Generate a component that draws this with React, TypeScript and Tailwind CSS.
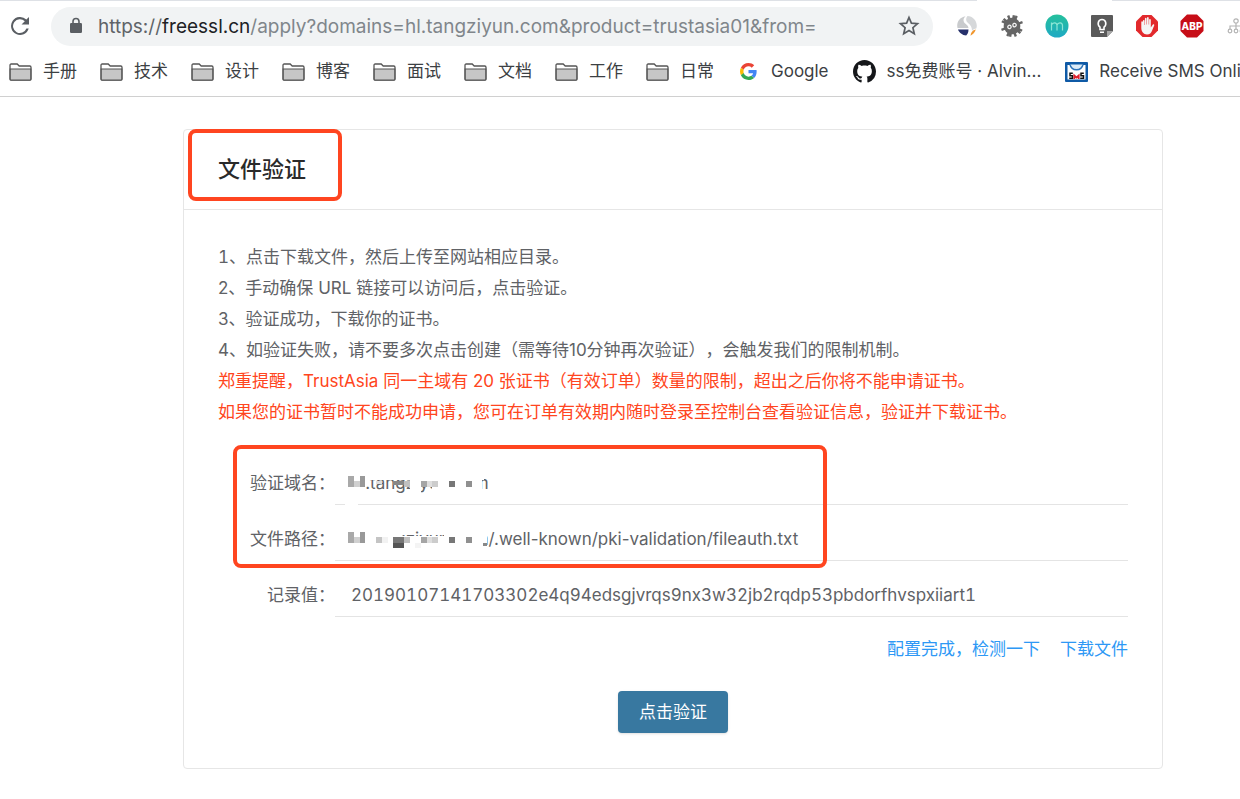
import React, { useState } from 'react'

interface IconItem {
  name: string
  icon: React.ReactNode
}

const FolderIcon = () => (
  <svg width="23" height="18" viewBox="0 0 23 18" fill="none" className="shrink-0">
    <path d="M1 16V2.2C1 1.5 1.4 1 2.2 1h6l2 2h10.6c.7 0 1.2.5 1.2 1.2V16c0 .6-.4 1-1 1H2c-.6 0-1-.4-1-1z" fill="#fff" stroke="#555" strokeWidth="1.3" />
    <path d="M1.2 6h20.6v10.2c0 .5-.3.8-.8.8H2c-.5 0-.8-.3-.8-.8z" fill="#c6c6c6" stroke="#555" strokeWidth="1.2" />
  </svg>
)

const GoogleIcon = () => (
  <svg width="17" height="17" viewBox="0 0 48 48">
    <path fill="#EA4335" d="M24 9.5c3.54 0 6.71 1.22 9.21 3.6l6.85-6.85C35.9 2.38 30.47 0 24 0 14.62 0 6.51 5.38 2.56 13.22l7.98 6.19C12.43 13.72 17.74 9.5 24 9.5z" />
    <path fill="#4285F4" d="M46.98 24.55c0-1.57-.15-3.09-.38-4.55H24v9.02h12.94c-.58 2.96-2.26 5.48-4.78 7.18l7.73 6c4.51-4.18 7.09-10.36 7.09-17.65z" />
    <path fill="#FBBC05" d="M10.53 28.59c-.48-1.45-.76-2.99-.76-4.59s.27-3.14.76-4.59l-7.98-6.19C.92 16.46 0 20.12 0 24c0 3.88.92 7.54 2.56 10.78l7.97-6.19z" />
    <path fill="#34A853" d="M24 48c6.48 0 11.93-2.13 15.89-5.81l-7.73-6c-2.15 1.45-4.92 2.3-8.16 2.3-6.26 0-11.57-4.22-13.47-9.91l-7.98 6.19C6.51 42.62 14.62 48 24 48z" />
  </svg>
)

const GithubIcon = () => (
  <svg width="23" height="23" viewBox="0 0 16 16" fill="#15171a">
    <path d="M8 0C3.58 0 0 3.58 0 8c0 3.54 2.29 6.53 5.47 7.59.4.07.55-.17.55-.38 0-.19-.01-.82-.01-1.49-2.01.37-2.53-.49-2.69-.94-.09-.23-.48-.94-.82-1.13-.28-.15-.68-.52-.01-.53.63-.01 1.08.58 1.23.82.72 1.21 1.87.87 2.33.66.07-.52.28-.87.51-1.07-1.78-.2-3.64-.89-3.64-3.95 0-.87.31-1.59.82-2.15-.08-.2-.36-1.02.08-2.12 0 0 .67-.21 2.2.82.64-.18 1.32-.27 2-.27s1.36.09 2 .27c1.53-1.04 2.2-.82 2.2-.82.44 1.1.16 1.92.08 2.12.51.56.82 1.27.82 2.15 0 3.07-1.87 3.75-3.65 3.95.29.25.54.73.54 1.48 0 1.07-.01 1.93-.01 2.2 0 .21.15.46.55.38A8.01 8.01 0 0 0 16 8c0-4.42-3.58-8-8-8z" />
  </svg>
)

const SmsIcon = () => (
  <svg width="23" height="20" viewBox="0 0 23 20">
    <rect width="23" height="20" rx="1" fill="#0f5aa6" />
    <path d="M2.5 3h18v14.5h-18z" fill="#fff" />
    <path d="M5 2.5c1.5 7 11.5 7 13 0" fill="#dcebf7" stroke="#2d73b8" strokeWidth="1.4" />
    <path d="M7.8 11.3H5v2.4h2.5v2.6H4.2M18.8 11.3H16v2.4h2.5v2.6h-3.3" fill="none" stroke="#111" strokeWidth="1.5" />
    <path d="M9.3 17v-3.5l2.2 2 2.2-2V17" fill="none" stroke="#e0202c" strokeWidth="1.8" />
  </svg>
)

const folders = ['手册', '技术', '设计', '博客', '面试', '文档', '工作', '日常']

const sites: IconItem[] = [
  { name: 'Google', icon: <GoogleIcon /> },
  { name: 'ss免费账号 · Alvin...', icon: <GithubIcon /> },
  { name: 'Receive SMS Onli', icon: <SmsIcon /> },
]

const extensions: IconItem[] = [
  {
    name: 'Search',
    icon: (
      <svg width="22" height="22" viewBox="0 0 22 22">
        <path d="M9.5 1.2C4.500 2 1.2 6 1.2 10.5c0 1 .1 1.8.3 2.5h11c-.3-2-1.5-3-3-4.2C6.8 6.5 7 3.5 9.5 1.2z" fill="#c9cbcd" />
        <path d="M11.5 1c5 .2 9.300 4.400 9.300 9.700 0 1.200-.2 2-.5 2.800-1.800.3-3.300 1.200-4.300 2.500 0-4-1.500-6-4-8-2.300-2-2.500-4.500-.5-7z" fill="#d6d8da" />
        <path d="M2 14.5h10.500c0 2.500-.8 4.600-2.300 6-4-.2-7-2.800-8.200-6z" fill="#26306b" />
        <path d="M14.500 20.800c.3-3.300 1.800-5.500 5.300-6.200-.9 2.800-2.800 5-5.300 6.200z" fill="#f0962e" />
      </svg>
    ),
  },
  {
    name: 'Tools',
    icon: (
      <svg width="24" height="24" viewBox="0 0 24 24">
        <g transform="rotate(-20 12 12)">
          <path
            d="M12 .8V23.2M.8 12H23.2M4.100 4.100l15.800 15.800M19.900 4.100L4.100 19.900M6.500 2.500l11 19M17.500 2.500l-11 19"
            stroke="#666"
            strokeWidth="2.400"
          />
          <circle cx="12" cy="12" r="8.300" fill="#666" />
          <circle cx="9.300" cy="12" r="1.700" fill="#666" stroke="#f4f4f4" strokeWidth="1.300" />
          <circle cx="14.700" cy="12" r="1.700" fill="#666" stroke="#f4f4f4" strokeWidth="1.300" />
        </g>
      </svg>
    ),
  },
  {
    name: 'M',
    icon: (
      <svg width="24" height="24" viewBox="0 0 24 24">
        <defs>
          <linearGradient id="teal" x1="0" y1="0" x2="0" y2="1">
            <stop offset="0" stopColor="#25c09c" />
            <stop offset="1" stopColor="#1fa9c4" />
          </linearGradient>
        </defs>
        <circle cx="12" cy="12" r="11.5" fill="url(#teal)" />
        <path d="M6.5 16.5V8.5M6.5 11c1-3 5.5-3 5.5.5v5M12 11c1-3 5.5-3 5.5.5v5" fill="none" stroke="#8be6d6" strokeWidth="1.2" />
      </svg>
    ),
  },
  {
    name: 'Keep',
    icon: (
      <svg width="22" height="22" viewBox="0 0 22 22">
        <path d="M1 0h20a1 1 0 0 1 1 1v15l-6 6H1a1 1 0 0 1-1-1V1a1 1 0 0 1 1-1z" fill="#5a5a5a" />
        <path d="M22 16l-6 6v-6z" fill="#a5a5a5" />
        <path d="M9 14.5v-2.3c-3-2.2-2.2-7.7 2-7.7s5 5.5 2 7.7v2.3zM9 17.2h4" fill="none" stroke="#fff" strokeWidth="1.6" />
      </svg>
    ),
  },
  {
    name: 'AdBlock',
    icon: (
      <svg width="22" height="22" viewBox="0 0 22 22">
        <path d="M6.5 0h9L22 6.5v9L15.5 22h-9L0 15.5v-9z" fill="#e2292c" />
        <path d="M5.3 6.5v6.3c0 3.900 2.200 6.700 5.700 6.700 2.800 0 4.200-1.600 5-3.800l2.200-5.300c.3-1.100-1.100-1.500-1.700-.5L14.800 12.500V4.800c0-1.200-1.700-1.200-1.700 0V9.500h-.4V3c0-1.200-1.700-1.200-1.700 0v6.500h-.4V3.700c0-1.200-1.700-1.200-1.700 0V10h-.4V5.800c0-1.200-1.600-1-1.600.7z" fill="#f5f5f5" />
      </svg>
    ),
  },
  {
    name: 'Adblock Plus',
    icon: (
      <svg width="24" height="24" viewBox="0 0 24 24">
        <path d="M7 .5h10L23.5 7v10L17 23.5H7L.5 17V7z" fill="#c70d17" />
        <text x="12" y="16" textAnchor="middle" fontSize="10" fontWeight="800" fill="#fff">ABP</text>
      </svg>
    ),
  },
  {
    name: 'Sitemap',
    icon: (
      <svg width="22" height="18" viewBox="0 0 22 18" fill="none" stroke="#b4b4b4" strokeWidth="1.2">
        <circle cx="10" cy="4" r="2.2" />
        <path d="M10 6.2V12M4 12V9h12v3" />
        <circle cx="4" cy="14" r="1.8" />
        <circle cx="10" cy="14" r="1.8" />
        <circle cx="16" cy="14" r="1.8" />
      </svg>
    ),
  },
]

// x, y, width, height, colour of each mosaic tile
type Tile = [number, number, number, number, string]

const domainTiles: Tile[] = [
  [0, -2, 18, 18, '#fff'],
  [18, -2, 118, 6, '#fff'],
  [62, 4, 11, 13, '#fff'],
  [73, 4, 11, 7, '#fff'],
  [84, 4, 50, 14, '#fff'],
  [-3, 27, 13, 3, '#fff'],
  [0, 0, 6, 11, '#a9a9a9'],
  [6, 5, 6, 6, '#d0d0d0'],
  [12, 0, 5, 11, '#999'],
  [28, 5, 6, 3, '#dedede'],
  [45, 5, 11, 4, '#888'],
  [56, 5, 6, 6, '#c0c0c0'],
  [73, 5, 6, 6, '#a5a5a5'],
  [79, 5, 5, 6, '#dedede'],
  [84, 5, 6, 6, '#ccc'],
  [101, 5, 6, 6, '#777'],
  [118, 5, 6, 6, '#909090'],
]

const pathTiles: Tile[] = [
  [0, -2, 54, 20, '#fff'],
  [54, 4, 42, 14, '#fff'],
  [96, -2, 43, 20, '#fff'],
  [0, 0, 6, 11, '#a9a9a9'],
  [6, 5, 6, 6, '#d0d0d0'],
  [12, 0, 5, 11, '#999'],
  [28, 5, 6, 6, '#c4c4c4'],
  [34, 5, 6, 6, '#f2f2f2'],
  [45, 5, 11, 6, '#777'],
  [56, 5, 6, 6, '#c0c0c0'],
  [45, 11, 11, 5, '#555'],
  [67, 11, 6, 5, '#f4f4f4'],
  [73, 5, 6, 6, '#a5a5a5'],
  [79, 5, 5, 6, '#dedede'],
  [84, 5, 6, 6, '#ccc'],
  [101, 5, 6, 6, '#777'],
  [118, 5, 6, 6, '#909090'],
  [135, 11, 4, 3, '#888'],
]

const Mosaic = ({ tiles }: { tiles: Tile[] }) => (
  <svg
    width="142"
    height="18"
    viewBox="0 0 142 18"
    shapeRendering="crispEdges"
    className="pointer-events-none absolute top-[13px] left-[13px] overflow-visible"
  >
    {tiles.map(([x, y, w, h, fill], i) => (
      <rect key={i} x={x} y={y} width={w} height={h} fill={fill} />
    ))}
  </svg>
)

interface FieldProps {
  id: string
  label: string
  value: string
  tiles?: Tile[]
  className?: string
}

const Field = ({ id, label, value, tiles, className = '' }: FieldProps) => (
  <div className={`flex h-14 items-center pt-3.5 ${className}`}>
    <label htmlFor={id} className="w-[117px] shrink-0 text-right">
      {label}
    </label>
    <div className="relative flex h-full flex-1 items-center border-b border-[#e4e4e4]">
      <input id={id} readOnly value={value} className="w-full bg-transparent px-4 outline-none" />
      {tiles && <Mosaic tiles={tiles} />}
    </div>
  </div>
)

const Toolbar = () => {
  const [url, setUrl] = useState('/apply?domains=hl.tangziyun.com&product=trustasia01&from=')

  return (
    <header className="overflow-hidden border-b border-[#d0d0d0] bg-white">
      {/* bottom edge of the tab strip, open under the active tab */}
      <div className="flex h-px justify-between">
        <div className="w-[977px] bg-[#dee1e6]" />
        <div className="w-32 bg-[#dee1e6]" />
      </div>
      <div className="flex h-12 items-center pt-0.5">
        <button aria-label="Reload" className="ml-2 shrink-0">
          <svg width="24" height="24" viewBox="0 0 24 24" fill="#5a5e63">
            <path d="M18.4 5.6A9 9 0 1 0 20.7 14.5h-2.3A6.900 6.900 0 1 1 16.800 7.200L13.500 10.500H21V3z" />
          </svg>
        </button>
        <div className="ml-[19px] flex h-[39px] w-[882px] shrink-0 items-center rounded-full bg-[#f1f3f4] pr-3 pl-[18px] text-[19px]">
          <svg width="14" height="18" viewBox="0 0 14 18" className="shrink-0">
            <rect x="1" y="6" width="12" height="10" rx="1.2" fill="#5a5e63" />
            <path d="M4 7V4.500a3 3 0 0 1 6 0V7" fill="none" stroke="#5a5e63" strokeWidth="1.6" />
          </svg>
          <label htmlFor="url" className="ml-[15px] shrink-0 pt-0.5 text-[#5f6368]">
            https://<span className="text-[#202124]">freessl.cn</span>
          </label>
          <input
            id="url"
            value={url}
            onChange={(e) => setUrl(e.target.value)}
            className="min-w-0 flex-1 bg-transparent pt-0.5 text-[#80868b] outline-none"
          />
          <button aria-label="Bookmark this page" className="shrink-0">
            <svg width="24" height="24" viewBox="0 0 24 24" fill="none" stroke="#5a5e63" strokeWidth="1.7">
              <path d="M12 3.5l2.400 5.700 6.100.5-4.600 4 1.400 6L12 16.500l-5.300 3.200 1.400-6-4.600-4 6.100-.5z" />
            </svg>
          </button>
        </div>
        <div className="ml-[11px] flex shrink-0">
          {extensions.map((ext) => (
            <button key={ext.name} aria-label={ext.name} className="flex w-[45px] shrink-0 items-center justify-center">
              {ext.icon}
            </button>
          ))}
        </div>
      </div>
      <nav className="flex h-[47px] items-center pb-0.5 pl-[9px] text-[17px] whitespace-nowrap text-[#3c4043]">
        {folders.map((name) => (
          <button key={name} className="flex w-[91px] shrink-0 items-center gap-[11px]">
            <FolderIcon />
            {name}
          </button>
        ))}
        {sites.map((site) => (
          <a key={site.name} href="#" className="mr-6 flex shrink-0 items-center gap-[11px]">
            <span className="flex w-[23px] justify-center">{site.icon}</span>
            {site.name}
          </a>
        ))}
      </nav>
    </header>
  )
}

export default function App() {
  return (
    <div className="min-h-screen bg-white font-['Inter','Noto_Sans_CJK_SC',sans-serif] [text-spacing-trim:space-all]">
      <Toolbar />

      <main className="mt-8 mr-[77px] mb-7 ml-[183px] rounded-sm border border-[#e6e6e6] text-[17px] text-[#606266]">
        <div className="relative flex h-20 items-center border-b border-[#e6e6e6] px-[34px]">
          <h1 className="text-[22px] font-medium text-[#2a2a2a]">文件验证</h1>
          <div className="absolute -top-px left-1 h-[72px] w-[154px] rounded-lg border-4 border-[#ff4520]" />
        </div>

        <div className="px-[34px] pt-8 pb-[35px]">
          <div className="leading-[31px]">
            <p className="tabular-nums">1、点击下载文件，然后上传至网站相应目录。</p>
            <p>2、手动确保 URL 链接可以访问后，点击验证。</p>
            <p>3、验证成功，下载你的证书。</p>
            <p>4、如验证失败，请不要多次点击创建（需等待10分钟再次验证），会触发我们的限制机制。</p>
            <p className="text-[#ff4520]">郑重提醒，TrustAsia 同一主域有 20 张证书（有效订单）数量的限制，超出之后你将不能申请证书。</p>
            <p className="text-[#ff4520]">如果您的证书暂时不能成功申请，您可在订单有效期内随时登录至控制台查看验证信息，验证并下载证书。</p>
          </div>

          <form className="relative mt-[21px]" onSubmit={(e) => e.preventDefault()}>
            <Field id="domain" label="验证域名：" value="hl.tangziyun.com" tiles={domainTiles} />
            <Field id="path" label="文件路径：" value="hl.tangziyun.com/.well-known/pki-validation/fileauth.txt" tiles={pathTiles} />
            <Field id="record" label="记录值：" value="20190107141703302e4q94edsgjvrqs9nx3w32jb2rqdp53pbdorfhvspxiiart1" className="tabular-nums" />
            <div className="pointer-events-none absolute -top-1 left-[15px] h-[123px] w-[594px] rounded-lg border-4 border-[#ff4520]" />

            <div className="mt-5 flex justify-end gap-5 text-[#2d98f5]">
              <a href="#">配置完成，检测一下</a>
              <a href="#">下载文件</a>
            </div>
            <button type="submit" className="mx-auto mt-7 block h-[42px] rounded bg-[#3878a0] px-[21px] pt-0.5 text-white shadow-sm">
              点击验证
            </button>
          </form>
        </div>
      </main>
    </div>
  )
}
